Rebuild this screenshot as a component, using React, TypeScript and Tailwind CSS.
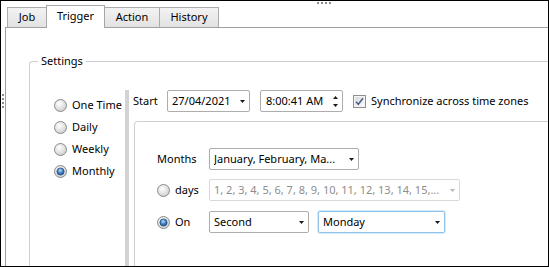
import React from 'react'

function DownArrow({ disabled }: { disabled?: boolean }) {
  return (
    <svg width="5" height="3" viewBox="0 0 5 3" className="shrink-0">
      <polygon points="0,0 5,0 2.5,3" fill={disabled ? '#b5b5b5' : '#1a1a1a'} />
    </svg>
  )
}

function Radio({ checked, id }: { checked?: boolean; id: string }) {
  const key = id.replace(/\s+/g, '-')
  return (
    <svg width="13" height="13" viewBox="0 0 13 13" className="shrink-0">
      <defs>
        <radialGradient id={`rg-${key}`} cx="0.4" cy="0.35" r="0.75">
          <stop offset="0" stopColor="#ffffff" />
          <stop offset="1" stopColor="#c9c9c9" />
        </radialGradient>
        <radialGradient id={`rb-${key}`} cx="0.45" cy="0.35" r="0.7">
          <stop offset="0" stopColor="#b4dcf7" />
          <stop offset="0.55" stopColor="#3d7dbd" />
          <stop offset="1" stopColor="#1a4c82" />
        </radialGradient>
      </defs>
      <circle cx="6.5" cy="6.5" r="6" fill={`url(#rg-${key})`} stroke="#8a8a8a" />
      {checked && <circle cx="6.5" cy="6.5" r="3.6" fill={`url(#rb-${key})`} stroke="#1d4a78" strokeWidth="0.7" />}
    </svg>
  )
}

function Checkbox() {
  return (
    <svg width="13" height="13" viewBox="0 0 13 13" className="shrink-0">
      <defs>
        <linearGradient id="cbg" x1="0" y1="0" x2="1" y2="1">
          <stop offset="0" stopColor="#dcdcdc" />
          <stop offset="1" stopColor="#f8f8f8" />
        </linearGradient>
      </defs>
      <rect x="0.5" y="0.5" width="12" height="12" fill="#f6f6f6" stroke="#8e8f8f" />
      <rect x="2" y="2" width="9" height="9" fill="url(#cbg)" />
      <path d="M3 6.8 L5.3 9.3 L10 3.3" stroke="#4a5f8c" strokeWidth="1.5" fill="none" />
    </svg>
  )
}

function Combo({
  w,
  text,
  disabled,
  focused,
}: {
  w: string
  text: string
  disabled?: boolean
  focused?: boolean
}) {
  return (
    <div
      className={`${w} h-[22px] shrink-0 flex items-center justify-between pl-[4px] pr-[4px] rounded-[2px] bg-white border ${
        focused
          ? 'border-[#8fc2ea] shadow-[0_0_0_1px_#d6ecfb]'
          : disabled
          ? 'border-[#d9d9d9]'
          : 'border-[#adadad]'
      }`}
    >
      <span className={`whitespace-nowrap overflow-hidden ${disabled ? 'text-[#8d8d8d]' : 'text-black'}`}>{text}</span>
      <DownArrow disabled={disabled} />
    </div>
  )
}

function Tab({ label, w, selected }: { label: string; w: string; selected?: boolean }) {
  if (selected)
    return (
      <div className={`${w} relative z-10 -ml-px -mb-px h-[23px] bg-white border border-b-0 border-[#a7a7a7] flex items-center justify-center pb-[1px]`}>
        {label}
      </div>
    )
  return (
    <div className={`${w} -ml-px first:ml-0 h-[20px] bg-linear-to-b from-[#f3f3f3] to-[#e2e2e2] border border-b-0 border-[#acacac] flex items-center justify-center`}>
      {label}
    </div>
  )
}

export default function App() {
  return (
    <div className="w-[549px] h-[267px] border border-black bg-white relative overflow-hidden flex flex-col text-[11px] text-black [font-family:'Noto_Sans',sans-serif]">
      {/* splitter grips */}
      <div className="absolute left-[316px] top-[1px] flex gap-[2px]">
        {[0, 1, 2, 3].map(i => <div key={i} className="w-[2px] h-[2px] bg-[#8c8c8c]" />)}
      </div>
      <div className="absolute left-[1px] top-[93px] flex flex-col gap-[2px]">
        {[0, 1, 2, 3].map(i => <div key={i} className="w-[2px] h-[2px] bg-[#8c8c8c]" />)}
      </div>

      {/* Tabs */}
      <div className="h-[26px] shrink-0 flex items-end pl-[6px]">
        <Tab label="Job" w="w-[40px]" />
        <Tab label="Trigger" w="w-[59px]" selected />
        <Tab label="Action" w="w-[56px]" />
        <Tab label="History" w="w-[60px]" />
      </div>

      {/* Tab page */}
      <div className="flex-1 ml-[4px] border-l border-t border-[#a0a0a0] pl-[23px] pt-[33px] flex flex-col">
        {/* Settings group */}
        <div className="relative flex-1 border-l border-t border-[#cdcdd3] rounded-tl-[4px] flex">
          <span className="absolute left-[8px] -top-[9px] px-[3px] bg-white leading-[15px]">Settings</span>

          {/* schedule type */}
          <div className="w-[95px] shrink-0 pl-[24px] pt-[32px] flex flex-col">
            {[
              ['One Time', false],
              ['Daily', false],
              ['Weekly', false],
              ['Monthly', true],
            ].map(([label, checked]) => (
              <div key={label as string} className="h-[22px] flex items-center gap-[5px]">
                <Radio id={label as string} checked={checked as boolean} />
                <span className="whitespace-nowrap">{label}</span>
              </div>
            ))}
          </div>

          {/* splitter */}
          <div className="w-[4px] shrink-0 mt-[28px] bg-[#d3d3d3]" />

          {/* details */}
          <div className="flex-1 pl-[4px] pt-[28px] flex flex-col">
            <div className="h-[22px] flex items-center">
              <span className="w-[34px] shrink-0">Start</span>
              <Combo w="w-[83px]" text="27/04/2021" />
              <div className="ml-[10px] w-[83px] h-[22px] shrink-0 flex items-center justify-between pl-[5px] pr-[4px] rounded-[2px] bg-white border border-[#adadad]">
                <span className="whitespace-nowrap">8:00:41 AM</span>
                <div className="flex flex-col gap-[5px]">
                  <svg width="5" height="3" viewBox="0 0 5 3"><polygon points="0,3 5,3 2.5,0" fill="#1a1a1a" /></svg>
                  <svg width="5" height="3" viewBox="0 0 5 3"><polygon points="0,0 5,0 2.5,3" fill="#1a1a1a" /></svg>
                </div>
              </div>
              <div className="ml-[10px] flex items-center gap-[5px]">
                <Checkbox />
                <span className="whitespace-nowrap">Synchronize across time zones</span>
              </div>
            </div>

            <div className="mt-[9px] ml-[1px] flex-1 border-l border-t border-[#cfcfcf] rounded-tl-[4px] pl-[22px] pt-[26px] flex flex-col">
              <div className="h-[22px] flex items-center">
                <span className="w-[52px] shrink-0">Months</span>
                <Combo w="w-[150px]" text="January, February, Ma..." />
              </div>
              <div className="mt-[9px] h-[22px] flex items-center">
                <div className="w-[52px] shrink-0 flex items-center gap-[5px]">
                  <Radio id="days" />
                  <span>days</span>
                </div>
                <Combo w="w-[251px]" text="1, 2, 3, 4, 5, 6, 7, 8, 9, 10, 11, 12, 13, 14, 15,..." disabled />
              </div>
              <div className="mt-[10px] h-[22px] flex items-center">
                <div className="w-[52px] shrink-0 flex items-center gap-[5px]">
                  <Radio id="on" checked />
                  <span>On</span>
                </div>
                <Combo w="w-[100px]" text="Second" />
                <div className="ml-[9px]">
                  <Combo w="w-[127px]" text="Monday" focused />
                </div>
              </div>
            </div>
          </div>
        </div>
      </div>
    </div>
  )
}
